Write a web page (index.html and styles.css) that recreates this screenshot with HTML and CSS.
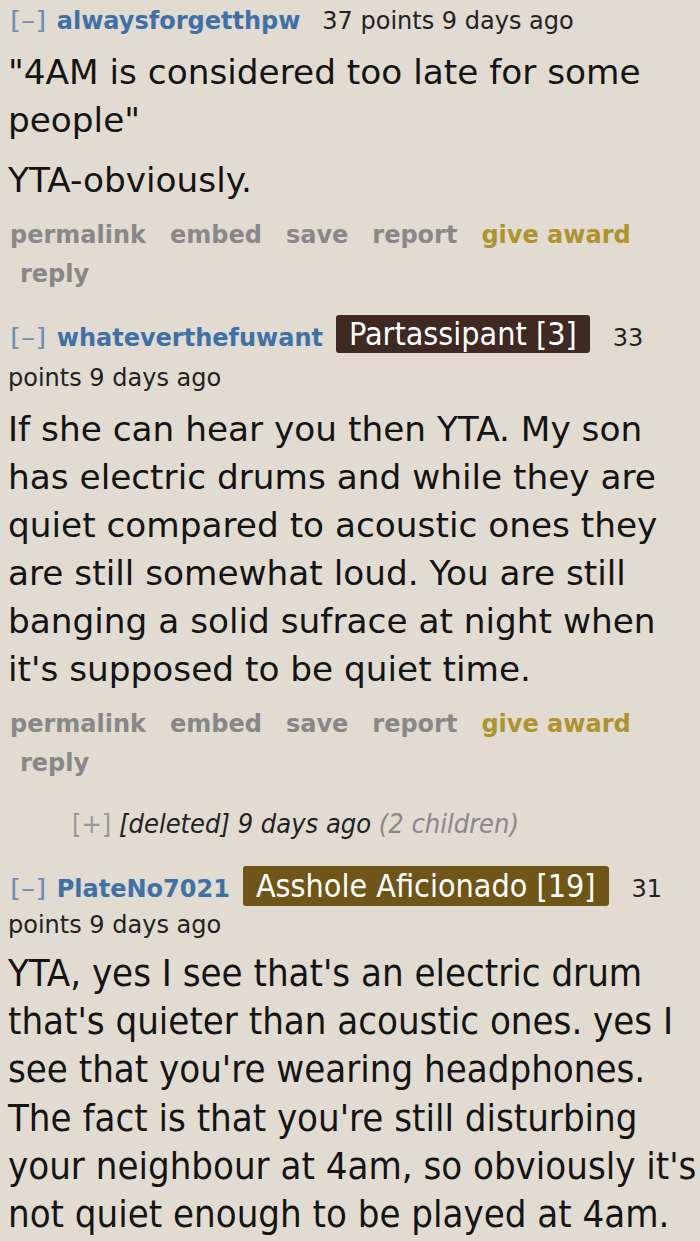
FILE: index.html
```html
<!DOCTYPE html>
<html>
<head>
<meta charset="utf-8">
<link rel="stylesheet" href="styles.css">
</head>
<body>
<div class="thread">
  <div class="comment">
    <p class="tagline"><span class="expand">[–]</span><span class="author">alwaysforgetthpw</span><span class="meta">37 points 9 days ago</span></p>
    <div class="md">
      <p>"4AM is considered too late for some people"</p>
      <p>YTA-obviously.</p>
    </div>
    <ul class="buttons">
      <li>permalink</li><li>embed</li><li>save</li><li>report</li><li class="award">give award</li><li class="reply">reply</li>
    </ul>
  </div>

  <div class="comment">
    <p class="tagline"><span class="expand">[–]</span><span class="author">whateverthefuwant</span><span class="flair dark">Partassipant [3]</span><span class="meta">33</span> <span class="meta">points 9 days ago</span></p>
    <div class="md">
      <p>If she can hear you then YTA. My son has electric drums and while they are quiet compared to acoustic ones they are still somewhat loud. You are still banging a solid sufrace at night when it's supposed to be quiet time.</p>
    </div>
    <ul class="buttons">
      <li>permalink</li><li>embed</li><li>save</li><li>report</li><li class="award">give award</li><li class="reply">reply</li>
    </ul>
  </div>

  <div class="collapsed">
    <span class="expand">[+]</span> <em class="deleted">[deleted]</em> <em class="ago">9 days ago</em> <em class="children">(2 children)</em>
  </div>

  <div class="comment">
    <p class="tagline tight"><span class="expand">[–]</span><span class="author">PlateNo7021</span><span class="flair olive">Asshole Aficionado [19]</span><span class="meta">31</span> <span class="meta">points 9 days ago</span></p>
    <div class="md cond">
      <p>YTA, yes I see that's an electric drum that's quieter than acoustic ones. yes I see that you're wearing headphones. The fact is that you're still disturbing your neighbour at 4am, so obviously it's not quiet enough to be played at 4am.</p>
    </div>
  </div>
</div>
</body>
</html>
```

FILE: styles.css
```css
html, body {
  margin: 0;
  padding: 0;
  background: #e2dbd2;
}
body {
  font-family: "DejaVu Sans", Verdana, sans-serif;
  color: #141414;
  overflow: hidden;
}
.thread {
  padding: 1px 0 0 8px;
}
.tagline {
  margin: 0 0 7px;
  font-size: 24px;
  line-height: 40px;
  color: #222;
}
.tagline.tight {
  line-height: 36px;
  margin-bottom: 6px;
}
.expand {
  color: #6b8fb8;
  font-weight: normal;
  margin-left: 2px;
  margin-right: 16px;
  display: inline-block;
  transform: scaleX(1.18);
  transform-origin: left center;
}
.author {
  color: #3f70a6;
  font-weight: bold;
  margin-right: 22px;
}
.meta {
  color: #222;
}
.flair {
  display: inline-block;
  color: #fff;
  font-family: "DejaVu Sans Condensed", "DejaVu Sans", sans-serif;
  font-size: 32px;
  line-height: 38px;
  padding: 0 13px;
  border-radius: 3px;
  margin-left: -9px;
  margin-right: 23px;
  vertical-align: 1px;
}
.tight .flair { line-height: 40px; vertical-align: 0; }
.flair.dark { background: #3e2a22; }
.flair.olive { background: #6f5618; }
.md p {
  margin: 0 0 12px;
  font-size: 34.3px;
  line-height: 48px;
}
.md.cond p {
  font-family: "DejaVu Sans Condensed", "DejaVu Sans", sans-serif;
  font-size: 38px;
  line-height: 48.2px;
}
.buttons {
  list-style: none;
  margin: 0;
  padding: 0 0 0 2px;
  display: flex;
  flex-wrap: wrap;
  column-gap: 24px;
}
.buttons li {
  font-size: 24px;
  font-weight: bold;
  color: #888;
  line-height: 39px;
}
.buttons li.award { color: #ad942e; }
.buttons li.reply { margin-left: 10px; }
.comment {
  margin-bottom: 21px;
}
.collapsed {
  padding-left: 64px;
  font-size: 27px;
  line-height: 40px;
  margin-bottom: 22px;
  font-family: "DejaVu Sans Condensed", "DejaVu Sans", sans-serif;
}
.collapsed .expand { color: #999; margin-left: 0; margin-right: 0; font-style: normal; transform: none; display: inline; }
.collapsed .deleted, .collapsed .ago { color: #222; }
.collapsed .children { color: #888; }
```
